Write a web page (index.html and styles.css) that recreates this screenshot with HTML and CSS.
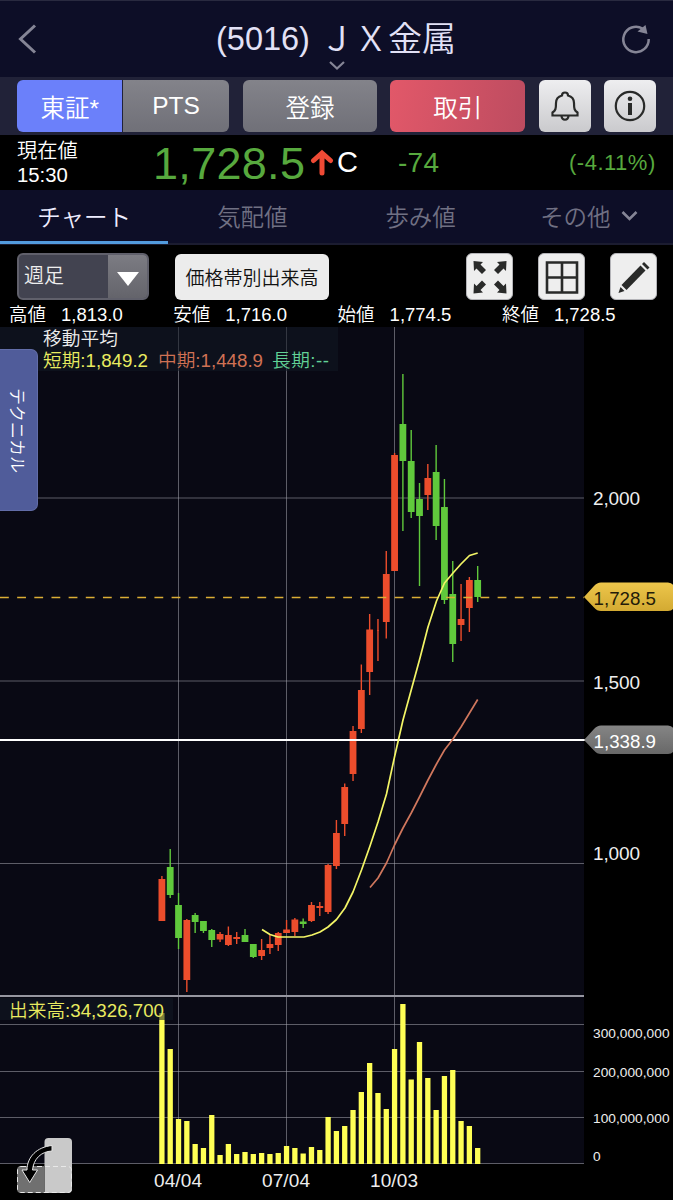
FILE: index.html
```html
<!DOCTYPE html>
<html lang="ja">
<head>
<meta charset="utf-8">
<title>(5016) ＪＸ金属</title>
<link rel="stylesheet" href="styles.css">
</head>
<body>
<div class="app">
  <header class="header">
    <svg class="back" width="22" height="32" viewBox="0 0 22 32"><path d="M18 2.500L3.500 16L18 29.500"/></svg>
    <h1 class="title"><span class="code">(5016)</span><span class="name">ＪＸ金属</span></h1>
    <svg class="title-caret" width="18" height="11" viewBox="0 0 18 11"><path d="M2 2L9 8.500L16 2"/></svg>
    <svg class="reload" width="32" height="32" viewBox="0 0 32 32"><path class="ring" d="M22.500 5.500A12.700 12.700 0 1 0 28.700 16"/><path class="tip" d="M25.500 2L27.500 11L17.500 8.500Z"/></svg>
  </header>

  <div class="toolbar">
    <div class="segment"><button class="seg on">東証*</button><button class="seg">PTS</button></div>
    <button class="btn register">登録</button>
    <button class="btn trade">取引</button>
    <button class="square bell"><svg width="30" height="32" viewBox="0 0 30 32"><path d="M2.500 25.500V22.500C5.500 20.500 6 19 6 13C6 9 8.300 6.500 12 5.500C12 1.500 18 1.500 18 5.500C21.700 6.500 24 9 24 13C24 19 24.500 20.500 27.500 22.500V25.500Z"/><path d="M11.500 26C12 31 18 31 18.500 26"/></svg></button>
    <button class="square info"><svg width="32" height="32" viewBox="0 0 32 32"><circle cx="16" cy="16" r="14.200"/><circle class="dot" cx="16" cy="8.800" r="2.300"/><path class="stem" d="M16 13V25"/></svg></button>
  </div>

  <section class="quote">
    <div class="when"><span>現在値</span><span>15:30</span></div>
    <div class="price">1,728.5</div>
    <svg class="up" width="24" height="28" viewBox="0 0 24 28"><path d="M3.500 11.500L12 4L20.500 11.500M12 5V24"/></svg>
    <div class="flag">C</div>
    <div class="change">-74</div>
    <div class="percent">(-4.11%)</div>
  </section>

  <nav class="tabs">
    <a class="tab active">チャート</a><a class="tab">気配値</a><a class="tab">歩み値</a>
    <a class="tab">その他<svg width="17" height="12" viewBox="0 0 17 12"><path d="M1.500 2L8.500 9L15.500 2"/></svg></a>
  </nav>

  <div class="controls">
    <div class="select"><span>週足</span><i><svg width="22" height="14" viewBox="0 0 22 14"><path d="M0 0H22L11 14Z"/></svg></i></div>
    <button class="by-price">価格帯別出来高</button>
    <button class="tool"><svg width="46" height="46" viewBox="0 0 46 46"><defs><path id="arrow" d="M6.500 7L16 8L13.500 10.500L19 16L15 20L9.500 14.500L7 17Z"/></defs><use href="#arrow"/><use href="#arrow" transform="matrix(-1 0 0 1 46 0)"/><use href="#arrow" transform="matrix(1 0 0 -1 0 46.500)"/><use href="#arrow" transform="matrix(-1 0 0 -1 46 46.500)"/></svg></button>
    <button class="tool"><svg width="46" height="46" viewBox="0 0 46 46"><path class="grid" d="M8 8.500H38V38.500H8ZM23 8.500V38.500M8 23.500H38"/></svg></button>
    <button class="tool"><svg width="46" height="46" viewBox="0 0 46 46"><path d="M29.500 11.500L34.500 16.500L15.500 36L10.500 31Z"/><path d="M31 10L33 8L38.500 13.500L36.500 15.500Z"/><path d="M9.500 33L13.500 37L7.500 39Z"/></svg></button>
  </div>

  <dl class="ohlc">
    <div><dt>高値</dt><dd>1,813.0</dd></div><div><dt>安値</dt><dd>1,716.0</dd></div><div><dt>始値</dt><dd>1,774.5</dd></div><div><dt>終値</dt><dd>1,728.5</dd></div>
  </dl>

  <main class="chart">
    <svg id="plot" width="673" height="873" viewBox="0 327 673 873">
      <defs>
        <linearGradient id="gold" x2="0" y2="1"><stop stop-color="#edc64b"/><stop offset="1" stop-color="#d3aa32"/></linearGradient>
        <linearGradient id="grey" x2="0" y2="1"><stop stop-color="#858585"/><stop offset="1" stop-color="#686868"/></linearGradient>
      </defs>
      <rect class="pane" y="327" width="584" height="837"/>
      <path class="gridlines" d="M178.500 327V1164M286.500 327V1164M394.500 327V1164M0 498H584M0 681H584M0 863.500H584M0 1024.500H584M0 1071.500H584M0 1117.500H584M0 1163.500H584"/>
      <g id="volumes" class="volumes"></g>
      <g id="candles"></g>
      <path class="divider" d="M0 996H584"/>
      <path class="last" d="M0 597.500H584"/>
      <path class="cursor" d="M0 740H588"/>
      <path class="ma short" d="M262 929.500L270 934.500L278 937H304L312 935L320 932L328 927L336.500 919.500L345 908L353 892L361.500 870L370 846L378 822L386.500 794L394.500 757L403 720L411.500 689L420 658L428 627L436.500 601L444.500 583L453 573L461 564L469.500 555.500L477.700 553"/>
      <path class="ma middle" d="M370 887.500L378 878L386.500 863L394.500 845L403 828L411.500 812.500L420 796L428 780L436.500 764L444.500 750L453 739L461 727L469.500 713L477.700 699.500"/>
      <rect class="shade" y="327" width="338" height="44"/><rect class="shade" y="998" width="173" height="22"/>
      <g class="heading">
        <text x="43" y="345" textLength="75">移動平均</text>
        <text class="y" x="43" y="367" textLength="105">短期:1,849.2</text>
        <text class="o" x="158" y="367" textLength="105">中期:1,448.9</text>
        <text class="g" x="272" y="367" textLength="57">長期:--</text>
        <text class="y" x="9" y="1017" textLength="155">出来高:34,326,700</text>
      </g>
      <g class="axis">
        <text x="593" y="505" textLength="47">2,000</text><text x="593" y="688.500" textLength="47">1,500</text><text x="593" y="860" textLength="47">1,000</text>
        <text x="154" y="1187" textLength="48">04/04</text><text x="262" y="1187" textLength="48">07/04</text><text x="370" y="1187" textLength="48">10/03</text>
      </g>
      <g class="volume-axis"><text x="593" y="1038" textLength="76.500">300,000,000</text><text x="593" y="1076.500" textLength="76.500">200,000,000</text><text x="593" y="1122.500" textLength="76.500">100,000,000</text><text x="593" y="1161">0</text></g>
      <path fill="url(#gold)" d="M584 597L594 586Q597 582.500 601 582.500H668Q673 583 674 587V607Q673 611 668 611H601Q597 611 594 607.500Z"/>
      <path fill="url(#grey)" d="M584 740L594 729Q597 725.500 601 725.500H668Q673 726 674 730V750Q673 754 668 754H601Q597 754 594 750.500Z"/>
      <g class="tags"><text class="dark" x="593.500" y="604.500" textLength="62.500">1,728.5</text><text x="593.500" y="747.500" textLength="62.500">1,338.9</text></g>
      <g class="rotate-screen">
        <path class="portrait" d="M44.500 1142Q44.500 1138 48.500 1138H68Q72 1138 72 1142V1189Q72 1193 68 1193H44.500Z"/>
        <path class="landscape" d="M44.500 1166H21Q17 1166 17 1170V1189Q17 1193 21 1193H44.500Z"/>
        <rect class="dashes" x="17.500" y="1166.500" width="54" height="26" rx="3.500"/>
        <path class="bend" d="M52 1145.500C37 1147 27 1157 27 1170H22L29.700 1182.500L37.500 1170H32.500C33.500 1159 41 1151.500 52 1151Z"/>
      </g>
    </svg>
    <button class="technical">テクニカル</button>
  </main>
</div>
<script src="chart.js"></script>
</body>
</html>
```
FILE: styles.css
```css
* { box-sizing: border-box; }
body { margin: 0; background: #000; color: #fff; font-family: "Liberation Sans", "Noto Sans CJK JP", sans-serif; font-weight: 350; }
button { border: 0; padding: 0; margin: 0; font: inherit; color: inherit; display: flex; align-items: center; justify-content: center; white-space: nowrap; }
svg { display: block; fill: none; flex: none; }
.app { width: 673px; height: 1200px; display: flex; flex-direction: column; overflow: hidden; }

.header { position: relative; height: 77px; background: #0d0e27; border-top: 1px solid #292a40; display: flex; align-items: center; justify-content: space-between; padding: 0 21px 0 17px; color: #e2e1f6; }
.back path, .title-caret path, .ring { stroke: #858596; stroke-width: 3; }
.ring { stroke-width: 2.5; }
.tip { fill: #858596; }
.title { margin: 0 0 0 14px; display: flex; align-items: center; font-size: 32.5px; font-weight: 350; line-height: 40px; white-space: nowrap; }
.code { width: 104px; }
.name { width: 137px; font-size: 34px; }
.title-caret { position: absolute; left: 328px; top: 59px; }
.title-caret path { stroke-width: 2.2; }

.toolbar { height: 58px; background: #212238; display: flex; align-items: center; padding: 0 17px; font-size: 24.5px; }
.segment { width: 212px; height: 52px; display: flex; gap: 1px; border-radius: 6px; overflow: hidden; margin-right: 14px; }
.seg { flex: 1; background: linear-gradient(#83838a, #707078); }
.seg.on { background: #6b80fa; }
.btn { width: 135px; height: 52px; border-radius: 6px; }
.register { background: linear-gradient(#83838a, #707078); margin-right: 13px; }
.trade { background: linear-gradient(100deg, #e25869, #bd4c60); margin-right: 14px; }
.square { width: 52px; height: 52px; border-radius: 6px; background: linear-gradient(#eeeef0, #cacacd); margin-right: 13px; }
.square path, .square circle { stroke: #292a29; stroke-width: 2.2; }
.info { margin-right: 0; }
.square .dot { fill: #292a29; stroke: none; }
.square .stem { stroke-width: 4; }

.quote { height: 55px; display: flex; align-items: center; padding-left: 17px; color: #57a93e; white-space: nowrap; }
.when { width: 136px; display: flex; flex-direction: column; font-size: 20.3px; line-height: 24px; color: #fff; }
.price { width: 156px; font-size: 45px; letter-spacing: .3px; padding-top: 2px; }
.up { margin-left: 1px; }
.up path { stroke: #ef4a35; stroke-width: 5; stroke-linecap: round; }
.flag { width: 64px; padding-left: 3px; font-size: 29px; color: #fff; }
.change { width: 167px; font-size: 28px; letter-spacing: .3px; }
.percent { font-size: 22px; letter-spacing: .5px; margin-left: 4px; }

.tabs { height: 55px; background: #0d0e27; border-bottom: 2px solid #1b1c30; display: grid; grid-template-columns: repeat(4, 1fr); }
.tab { display: flex; align-items: center; justify-content: center; gap: 10px; color: #707083; font-size: 23.5px; padding-bottom: 2px; }
.tab.active { color: #eeedff; border-bottom: 3px solid #529bdd; margin-bottom: -1px; padding-top: 2px; }
.tab path { stroke: #858596; stroke-width: 2.6; }

.controls { height: 57px; padding: 8px 16px 2px 17px; display: flex; align-items: center; }
.select { width: 132px; height: 47px; border: 2px solid #60606b; border-radius: 6px; background: #424350; display: flex; margin-right: 26px; font-size: 20px; overflow: hidden; }
.select span { width: 89px; padding-left: 5px; line-height: 43px; color: #eee; }
.select i { flex: 1; background: linear-gradient(#7c7c83, #64646b); display: flex; align-items: center; justify-content: center; padding-top: 4px; }
.select path { fill: #fff; }
.by-price { width: 154px; height: 46px; border-radius: 6px; background: #ececec; color: #111; font-size: 19px; margin-right: 137px; }
.tool { width: 47px; height: 47px; border: 1px solid #b4b4b8; border-radius: 6px; background: #eee; margin-right: 25px; }
.tool svg { fill: #292a29; }
.tool:last-child { margin-right: 0; }
.tool .grid { fill: none; stroke: #292a29; stroke-width: 2.6; }
.ohlc { height: 25px; margin: 0; padding-left: 9px; display: grid; grid-template-columns: repeat(4, 164.3px); align-items: center; font-size: 18.5px; line-height: 24px; }
.ohlc div { display: flex; gap: 15px; }
.ohlc dd { margin: 0; }

.chart { position: relative; height: 873px; }
.pane { fill: #090914; }
.gridlines { stroke: #aaaab5; stroke-opacity: .52; }
.divider { stroke: #9696a0; stroke-width: 2; }
.last { stroke: #dcae35; stroke-width: 1.7; stroke-dasharray: 8.8 8.36; }
.cursor { stroke: #fff; stroke-width: 2; }
.ma { stroke-width: 1.7; stroke-linejoin: round; }
.short { stroke: #f3f566; }
.middle { stroke: #d0775d; }
.shade { fill: #111723; fill-opacity: .55; }
.volumes { fill: #ffff55; }
.up-candle { fill: #ec4d2c; }
.down-candle { fill: #60c93c; }
.heading, .axis { font-size: 18.7px; fill: #eee; }
.axis { font-size: 19px; }
.y { fill: #e9eb60; }
.o { fill: #d07154; }
.g { fill: #62d397; }
.volume-axis { font-size: 13.7px; fill: #eee; }
.tags { font-size: 18.7px; fill: #fff; }
.dark { fill: #231b09; }
.portrait { fill: #c9c9c9; }
.landscape { fill: #707070; }
.dashes { stroke: #e8e8e8; stroke-dasharray: 5 3; stroke-width: 1; }
.bend { fill: #000; stroke: #e5e5e5; stroke-width: 1; }
.technical { position: absolute; left: 0; top: 22px; width: 38px; height: 162px; border-radius: 0 7px 7px 0; background: #505c9a; border: 1px solid #626da8; border-left: 0; writing-mode: vertical-rl; text-orientation: sideways; font-size: 17px; }
```
FILE: chart.js
```js
// Each week: direction, body top, body bottom, high, low, volume top.
const weeks = [
  ["r",879,921,876,921,1013],["g",867,895,849,898,1049],["g",905,938,893,949,1119],["r",920,980,919,992,1121],
  ["g",915,922,913,933,1144],["g",921,931,921,933,1148],["g",930,940,929,947,1115],["r",934,939.5,932,942,1155],
  ["r",935,945,926.5,946,1144],["r",937,939,932,944,1154],["g",935,942,929,942,1152],["g",944,957,944,958,1154],
  ["r",950,956,939,960,1153],["r",944,948,935,954,1154],["r",933,945,932,951,1153],["r",929.5,933,920,933,1146],
  ["r",919.5,932,918,936,1148],["g",921.5,924,918.5,928,1153.5],["r",905,921,902,922,1147],["r",906,908,902,916,1150],
  ["r",865,912,864,914,1117],["r",833,866,820,869,1131],["r",787,824,783.5,836,1126],["r",731,774,726,781,1110],
  ["r",690,729,664.5,733,1092],["r",629.5,672,614,695,1063],["r",630,631,619,661,1093],["r",574,622,551,638.5,1109],
  ["r",455,571,453,571,1049],["g",424,461,374,531,1004],["g",461,512,430,518,1079.5],["g",499,516,483,586,1042],
  ["r",478,495,464,510,1078],["g",472,526,445,540,1110],["g",507,600,479,604,1076],["g",594,644,561,662,1070],
  ["r",619,625,584,641,1121],["r",580,608,577,632,1126],["g",580,597,566,602,1148]
];
const ns = "http://www.w3.org/2000/svg";
function bar(parent, x, top, width, bottom, cls) {
  const rect = document.createElementNS(ns, "rect");
  rect.setAttribute("x", x - width / 2);
  rect.setAttribute("y", top);
  rect.setAttribute("width", width);
  rect.setAttribute("height", bottom - top);
  if (cls) rect.setAttribute("class", cls);
  parent.appendChild(rect);
}
const candles = document.getElementById("candles");
const volumes = document.getElementById("volumes");
weeks.forEach(([kind, top, bottom, high, low, volume], i) => {
  const x = 161.9 + i * 8.31;
  const cls = kind === "r" ? "up-candle" : "down-candle";
  bar(candles, x, high, 1.4, low, cls);
  bar(candles, x, top, i === 26 ? 1.4 : 6.8, bottom, cls);
  bar(volumes, x, volume, 5.3, 1164);
});
```
